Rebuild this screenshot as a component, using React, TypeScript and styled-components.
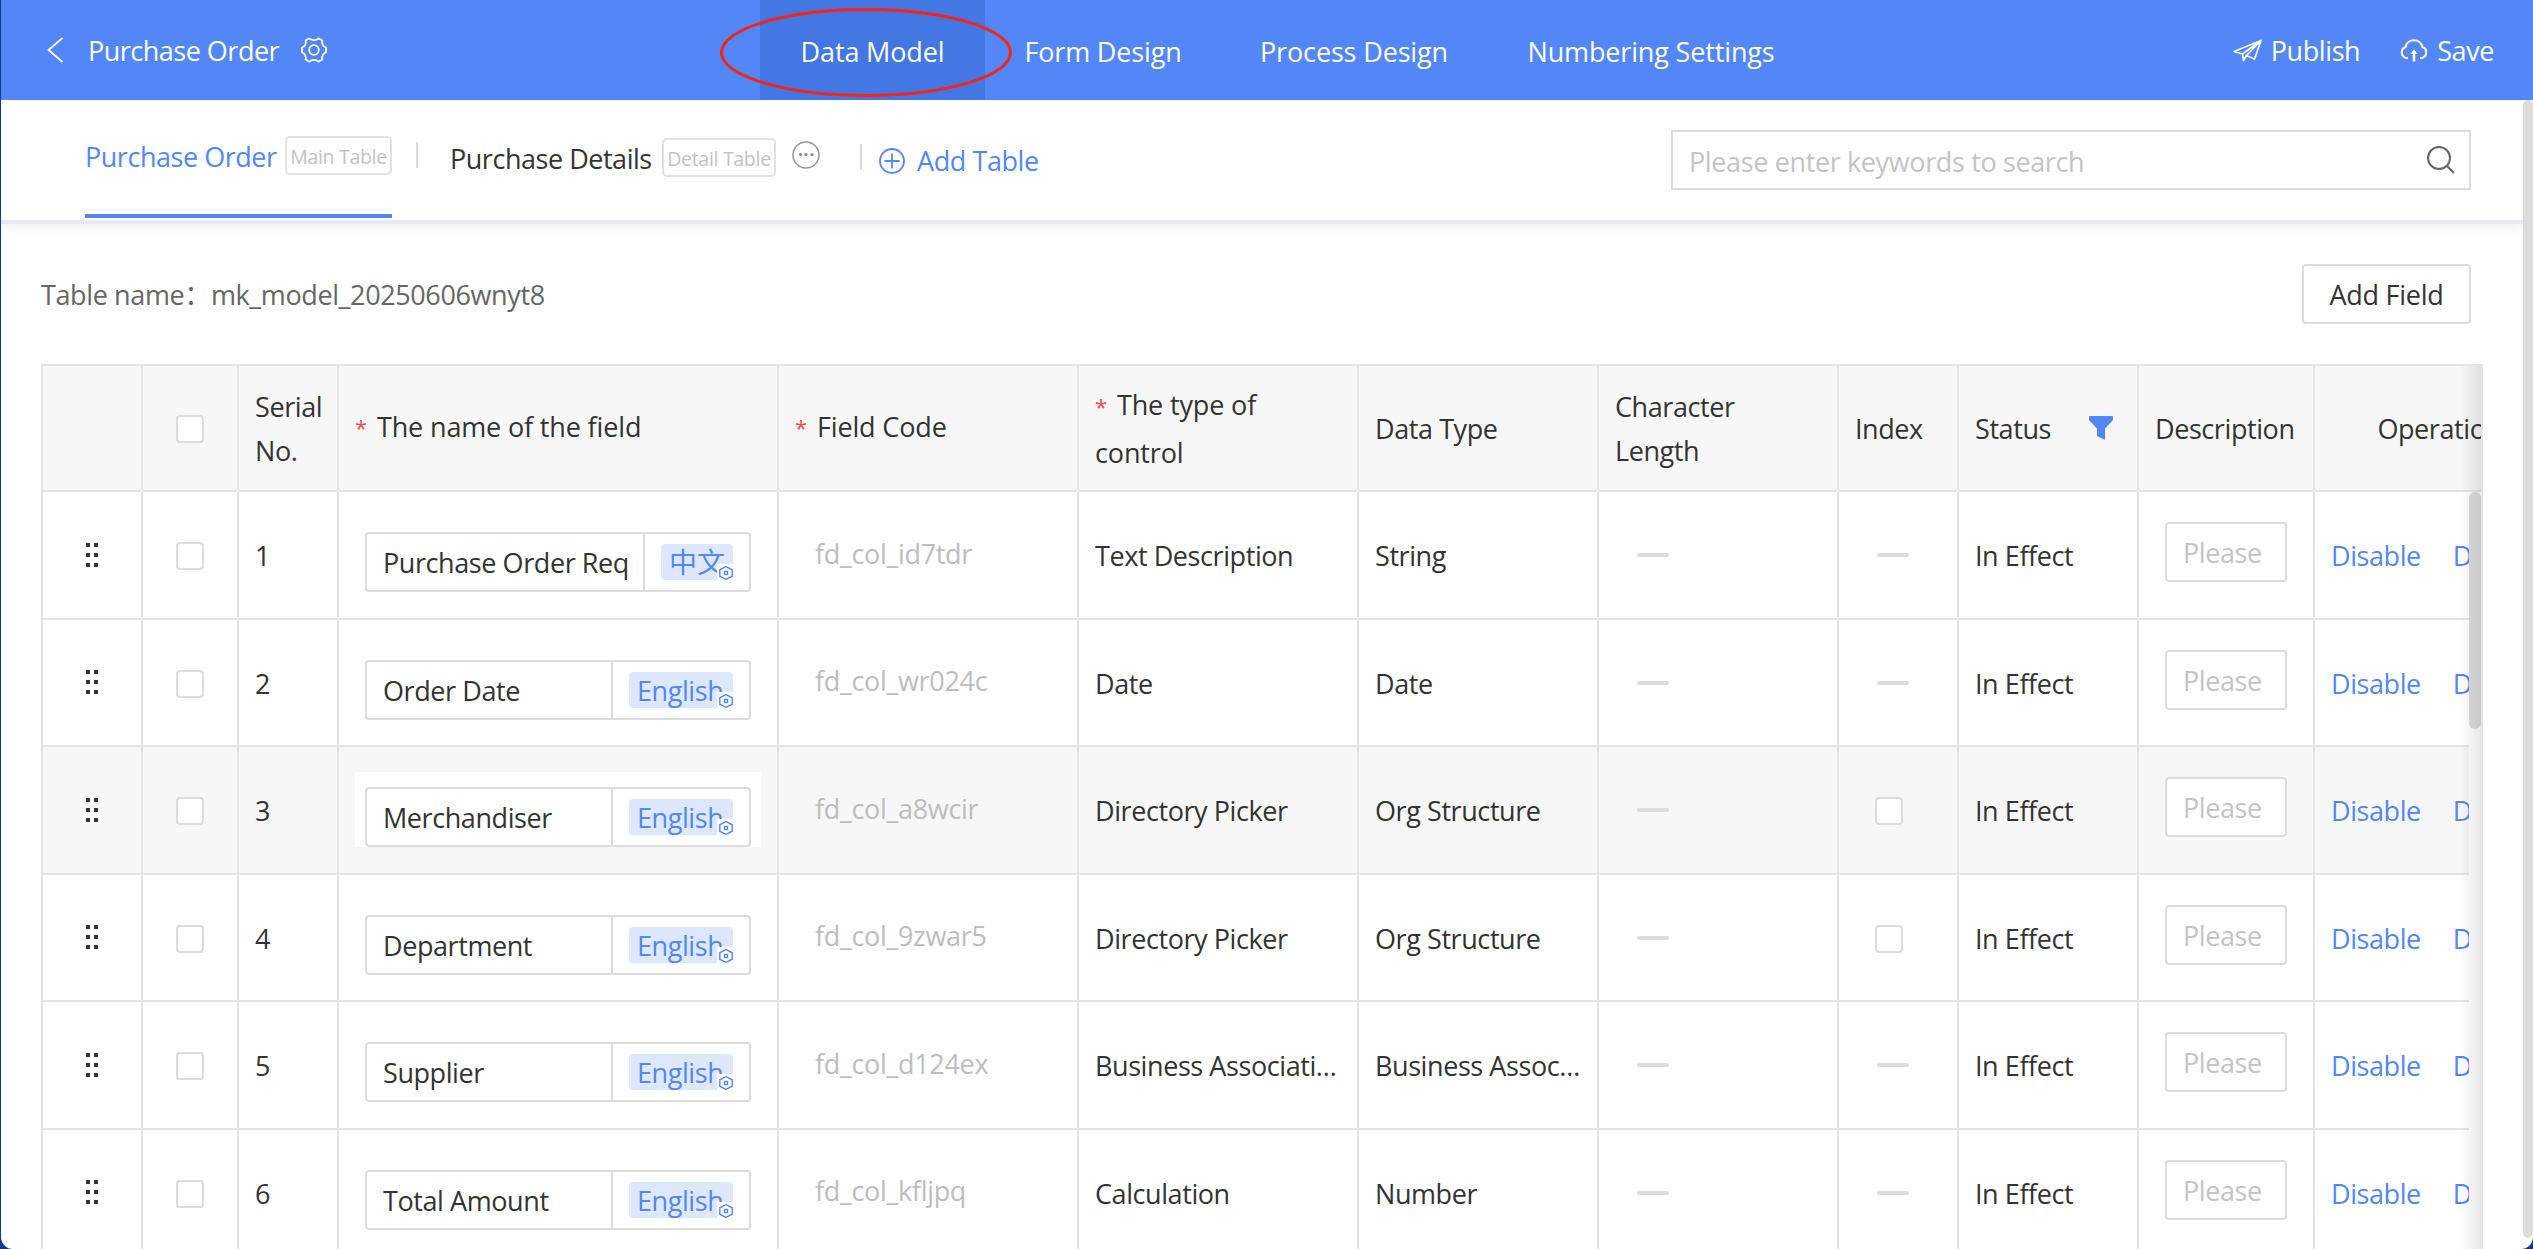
import React from "react";
import styled, { createGlobalStyle, css } from "styled-components";

const blue = "#5387f7";
const line = "#e4e4e4";
const boxLine = "#dcdcdc";

const GlobalStyle = createGlobalStyle`
  *, *::before, *::after { box-sizing: border-box; }
  html, body { margin: 0; height: 1249px; overflow: hidden; }
  body {
    background: #0b3a93;
    color: #333;
    font-family: "Open Sans", "Noto Sans CJK SC", sans-serif;
    font-size: 27px;
    letter-spacing: -0.42px;
    line-height: 44px;
    white-space: nowrap;
  }
`;

const Window = styled.div`
  display: flex;
  flex-direction: column;
  height: 1249px;
  margin-left: 1px;
  background: #fff;
  border-radius: 0 0 12px 12px;
  overflow: hidden;
`;

/* ---------- top bar ---------- */
const TopBar = styled.header`
  display: flex;
  flex: none;
  height: 100px;
  color: #fff;
  background: ${blue};
`;

const TopSide = styled.div<{ $w: number }>`
  display: flex;
  align-items: center;
  flex: none;
  width: ${(p) => p.$w}px;
  padding-left: 46px;
`;

const Title = styled.span`
  width: 191px;
  margin: 2px 22px 0 24px;
  letter-spacing: -0.5px;
`;

const Nav = styled.nav`
  display: flex;
  flex: 1;
  letter-spacing: -0.15px;
`;

const NavItem = styled.a<{ $w: number; $active?: boolean }>`
  position: relative;
  display: flex;
  align-items: center;
  justify-content: center;
  width: ${(p) => p.$w}px;
  padding-top: 3px;
  background: ${(p) => (p.$active ? "#4377e3" : "transparent")};
`;

const Highlight = styled.svg`
  position: absolute;
  left: -41px;
  top: 6px;
  z-index: 2;
`;

const Action = styled.button<{ $gap: number }>`
  display: flex;
  align-items: center;
  gap: 8px;
  margin-right: ${(p) => p.$gap}px;
  padding: 2px 0 0;
  border: 0;
  color: inherit;
  background: none;
  font: inherit;
  letter-spacing: inherit;
`;

/* ---------- body below the bar ---------- */
const Body = styled.div`
  display: flex;
  flex: 1;
  min-height: 0;
`;

const Main = styled.main`
  flex: 1;
  min-width: 0;
`;

const PageScroll = styled.div`
  width: 10px;
  height: 1138px;
  border-radius: 6px;
  background: #dcdcdc;
`;

const TabBar = styled.div`
  display: flex;
  height: 124px;
  padding: 0 52px 0 84px;
  border-bottom: 4px solid #e6eaf0;
  box-shadow: 0 4px 10px rgba(0, 0, 0, 0.06);
`;

const Tab = styled.div<{ $active?: boolean }>`
  display: flex;
  align-items: flex-start;
  gap: 9px;
  height: 118px;
  padding-top: ${(p) => (p.$active ? 36 : 38)}px;
  color: ${(p) => (p.$active ? blue : "#333")};
  border-bottom: ${(p) => (p.$active ? `4px solid ${blue}` : "0")};
`;

const TabName = styled.span<{ $w: number }>`
  width: ${(p) => p.$w}px;
  line-height: 42px;
  letter-spacing: -0.47px;
`;

const Kind = styled.span<{ $w: number }>`
  width: ${(p) => p.$w}px;
  height: 39px;
  border: 2px solid #e2e2e2;
  border-radius: 5px;
  color: #c0c3c8;
  font-size: 19.5px;
  line-height: 37px;
  letter-spacing: -0.3px;
  text-align: center;
`;

const Separator = styled.i<{ $left: number; $right: number; $top: number }>`
  width: 2px;
  height: 26px;
  margin: ${(p) => p.$top}px ${(p) => p.$right}px 0 ${(p) => p.$left}px;
  background: #dcdcdc;
`;

const More = styled.span`
  display: flex;
  margin: 41px 0 0 16px;
`;

const AddTable = styled.span`
  display: flex;
  align-items: center;
  gap: 12px;
  height: 44px;
  margin-top: 39px;
  color: ${blue};
`;

const Search = styled.label`
  display: flex;
  align-items: center;
  justify-content: space-between;
  width: 800px;
  height: 60px;
  margin: 30px 0 0 auto;
  padding: 0 14px 0 16px;
  border: 2px solid ${boxLine};
  color: #c4c4c4;
  letter-spacing: -0.37px;
  span { padding-top: 3px; }
`;

const Summary = styled.div`
  display: flex;
  align-items: center;
  justify-content: space-between;
  height: 140px;
  padding: 0 52px 0 40px;
  color: #666;
  span { padding-top: 2px; letter-spacing: -0.38px; }
`;

const Button = styled.button`
  width: 169px;
  height: 60px;
  padding: 2px 0 0;
  border: 2px solid ${boxLine};
  border-radius: 4px;
  color: #333;
  background: #fff;
  font: inherit;
  letter-spacing: -0.25px;
`;

/* ---------- field table ---------- */
const TableWrap = styled.section`
  position: relative;
  width: 2442px;
  height: 900px;
  margin-left: 40px;
  border: 2px solid ${line};
  overflow: hidden;
`;

const EdgeShade = styled.div`
  position: absolute;
  top: 0;
  right: 0;
  z-index: 3;
  width: 22px;
  height: 100%;
  background: linear-gradient(to right, rgba(0, 0, 0, 0), rgba(0, 0, 0, 0.09));
`;

const Thumb = styled.div`
  position: absolute;
  top: 126px;
  right: 0;
  z-index: 2;
  width: 12px;
  height: 237px;
  border-radius: 6px;
  background: #dcdcdc;
`;

const Viewport = styled.div`
  width: 2426px;
  overflow: hidden;
`;

const columns = css`
  display: grid;
  grid-template-columns: 100px 96px 100px 440px 300px 280px 240px 240px 120px 180px 176px 251px;
`;

const HeadRow = styled.div`
  ${columns}
  height: 126.4px;
  background: #f7f7f7;
`;

const Row = styled.div<{ $hover?: boolean }>`
  ${columns}
  height: 127.5px;
  background: ${(p) => (p.$hover ? "#f7f7f7" : "#fff")};
`;

const Cell = styled.div<{ $center?: boolean }>`
  display: flex;
  align-items: center;
  justify-content: ${(p) => (p.$center ? "center" : "flex-start")};
  min-width: 0;
  padding: 2px 16px 0;
  border-right: 2px solid ${line};
  border-bottom: 2px solid ${line};
`;

const HeadCell = styled(Cell)`
  white-space: normal;
`;

const RequiredCell = styled(HeadCell)<{ $tall?: boolean }>`
  padding-top: ${(p) => (p.$tall ? 1 : 0)}px;
  padding-bottom: ${(p) => (p.$tall ? 0 : 2)}px;
  line-height: 48px;
  letter-spacing: -0.15px;
`;

const Star = styled.span`
  margin-right: 10px;
  color: #f04b4b;
  font-size: 22px;
  line-height: 1;
`;

const HeadFilter = styled.div`
  display: flex;
  flex: 1;
  align-items: center;
  justify-content: space-between;
  padding-right: 8px;
  svg { margin-top: -3px; }
`;

const Ellipsis = styled.span`
  overflow: hidden;
  text-overflow: ellipsis;
`;

const Check = styled.i`
  width: 28px;
  height: 28px;
  border: 2px solid ${boxLine};
  border-radius: 4px;
  background: #fff;
`;

const IndexCell = styled(Cell)`
  padding-left: 36px;
`;

const Handle = styled.div`
  display: grid;
  grid-template-columns: 4px 4px;
  grid-auto-rows: 4px;
  gap: 6px 4px;
  margin-top: -3px;
  i { background: #333; }
`;

const Dash = styled.i`
  width: 32px;
  height: 4px;
  margin: -2px 0 0 22px;
  border-radius: 2px;
  background: #dcdcdc;
`;

const NameCell = styled(Cell)`
  align-items: flex-start;
  padding-top: 25px;
`;

const NameEditor = styled.div`
  width: 406px;
  height: 75px;
  padding: 15px 10px 0;
  background: #fff;
`;

const NameInput = styled.div`
  display: flex;
  height: 60px;
  border: 2px solid ${boxLine};
  border-radius: 4px;
`;

const NameText = styled.span`
  flex: 1;
  min-width: 0;
  overflow: hidden;
  padding: 7px 0 0 16px;
`;

const Language = styled.span`
  flex: none;
  padding: 10px 16px;
  border-left: 2px solid ${boxLine};
`;

const LanguageTag = styled.span<{ $chinese?: boolean }>`
  position: relative;
  display: block;
  width: ${(p) => (p.$chinese ? 72 : 104)}px;
  height: 36px;
  padding-left: 8px;
  border-radius: 4px;
  color: ${blue};
  background: #dde7fe;
  font-size: ${(p) => (p.$chinese ? 28 : 27)}px;
  letter-spacing: ${(p) => (p.$chinese ? 0 : -0.42)}px;
  line-height: ${(p) => (p.$chinese ? 36 : 38)}px;
`;

const TagGear = styled.svg`
  position: absolute;
  right: 0;
  bottom: 0;
  background: #fff;
`;

const Code = styled.span`
  margin-top: -5px;
  padding-left: 20px;
  color: #bdbdbd;
  letter-spacing: -0.32px;
`;

const DescCell = styled(Cell)`
  align-items: flex-start;
  padding: 30px 26px 0;
`;

const DescInput = styled.div`
  width: 122px;
  height: 60px;
  padding: 7px 16px;
  overflow: hidden;
  border: 2px solid ${boxLine};
  border-radius: 4px;
  color: #c4c4c4;
  background: #fff;
`;

const Links = styled.div`
  display: flex;
  gap: 32px;
  color: ${blue};
`;

type Field = {
  name: string;
  code: string;
  control: string;
  data: string;
  chinese?: boolean;
  indexable?: boolean;
  hover?: boolean;
};

const fields: Field[] = [
  { name: "Purchase Order Req", code: "fd_col_id7tdr", control: "Text Description", data: "String", chinese: true },
  { name: "Order Date", code: "fd_col_wr024c", control: "Date", data: "Date" },
  { name: "Merchandiser", code: "fd_col_a8wcir", control: "Directory Picker", data: "Org Structure", indexable: true, hover: true },
  { name: "Department", code: "fd_col_9zwar5", control: "Directory Picker", data: "Org Structure", indexable: true },
  { name: "Supplier", code: "fd_col_d124ex", control: "Business Association", data: "Business Association" },
  { name: "Total Amount", code: "fd_col_kfljpq", control: "Calculation", data: "Number" },
];

const GearIcon = () => (
  <svg width="26" height="26" viewBox="0 0 26 26" fill="none" stroke="#fff" strokeWidth="1.8" strokeLinejoin="round">
    <path d="M8.4 1.3 Q10.4 3.2 13 3.2 Q15.6 3.2 17.6 1.3 L21.3 3.5 Q20.7 6 22 8.2 Q23 9.8 25 10.6 V15.4 Q23 16.2 22 17.8 Q20.7 20 21.3 22.5 L17.6 24.7 Q15.6 22.8 13 22.8 Q10.4 22.8 8.4 24.7 L4.7 22.5 Q5.3 20 4 17.8 Q3 16.2 1 15.4 V10.6 Q3 9.8 4 8.2 Q5.3 6 4.7 3.5 Z" />
    <circle cx="13" cy="13" r="4.8" />
  </svg>
);

const FieldRow = ({ field, no }: { field: Field; no: number }) => (
  <Row $hover={field.hover}>
    <Cell $center>
      <Handle><i /><i /><i /><i /><i /><i /></Handle>
    </Cell>
    <Cell $center><Check /></Cell>
    <Cell>{no}</Cell>
    <NameCell>
      <NameEditor>
        <NameInput>
          <NameText>{field.name}</NameText>
          <Language>
            <LanguageTag $chinese={field.chinese}>
              {field.chinese ? "中文" : "English"}
              <TagGear width="16" height="16" viewBox="0 0 16 16" fill="none" stroke={blue} strokeWidth="1.4">
                <path d="M9 2.7 L15.2 5.8 V12.2 L9 15.3 L2.8 12.2 V5.8 Z" />
                <rect x="7.5" y="7.5" width="3" height="3" />
              </TagGear>
            </LanguageTag>
          </Language>
        </NameInput>
      </NameEditor>
    </NameCell>
    <Cell><Code>{field.code}</Code></Cell>
    <Cell><Ellipsis>{field.control}</Ellipsis></Cell>
    <Cell><Ellipsis>{field.data}</Ellipsis></Cell>
    <Cell><Dash /></Cell>
    {field.indexable ? <IndexCell><Check /></IndexCell> : <Cell><Dash /></Cell>}
    <Cell>In Effect</Cell>
    <DescCell><DescInput>Please</DescInput></DescCell>
    <Cell>
      <Links><span>Disable</span><span>Delete</span></Links>
    </Cell>
  </Row>
);

export default function App() {
  return (
    <>
      <GlobalStyle />
      <Window>
        <TopBar>
          <TopSide $w={759}>
            <svg width="17" height="26" viewBox="0 0 17 26" fill="none" stroke="#fff" strokeWidth="1.8">
              <path d="M15.5 1 L1.5 13 L15.5 25" />
            </svg>
            <Title>Purchase Order</Title>
            <GearIcon />
          </TopSide>
          <Nav>
            <NavItem $w={225} $active>
              Data Model
              <Highlight width="294" height="92" viewBox="0 0 294 92" fill="none">
                <ellipse cx="147" cy="46.5" rx="144.5" ry="43" stroke="#fb2313" strokeWidth="3" />
              </Highlight>
            </NavItem>
            <NavItem $w={236}>Form Design</NavItem>
            <NavItem $w={266}>Process Design</NavItem>
            <NavItem $w={328}>Numbering Settings</NavItem>
          </Nav>
          <Action $gap={39}>
            <svg width="30" height="24" viewBox="0 0 30 24" fill="none" stroke="#fff" strokeWidth="1.7" strokeLinejoin="round">
              <path d="M1 12.5 L28 1.5 L21.5 20 L13.5 16.5 L10.5 21.5 L9.5 15 Z M9.5 15 L28 1.5 L13.5 16.5" />
            </svg>
            Publish
          </Action>
          <Action $gap={39}>
            <svg width="30" height="24" viewBox="0 0 30 24" fill="none" stroke="#fff" strokeWidth="2">
              <path d="M9 19 H7.5 A5.7 5.7 0 0 1 6.6 8 A8.6 8.6 0 0 1 23.4 8 A5.7 5.7 0 0 1 22.5 19 H21" />
              <path d="M15 22.5 V12" strokeWidth="2.6" />
              <path d="M15 10.5 L18.5 15 H11.5 Z" fill="#fff" stroke="none" />
            </svg>
            Save
          </Action>
        </TopBar>
        <Body>
          <Main>
            <TabBar>
              <Tab $active>
                <TabName $w={191}>Purchase Order</TabName>
                <Kind $w={107}>Main Table</Kind>
              </Tab>
              <Separator $left={24} $right={32} $top={42} />
              <Tab>
                <TabName $w={203}>Purchase Details</TabName>
                <Kind $w={114}>Detail Table</Kind>
              </Tab>
              <More>
                <svg width="28" height="28" viewBox="0 0 28 28">
                  <circle cx="14" cy="14" r="13" fill="none" stroke="#999" strokeWidth="1.6" />
                  <g fill="#888">
                    <circle cx="8.5" cy="13.5" r="1.6" />
                    <circle cx="14" cy="13.5" r="1.6" />
                    <circle cx="20" cy="13.5" r="1.6" />
                  </g>
                </svg>
              </More>
              <Separator $left={40} $right={17} $top={44} />
              <AddTable>
                <svg width="26" height="26" viewBox="0 0 26 26" fill="none" stroke={blue} strokeWidth="1.8">
                  <circle cx="13" cy="13" r="12" />
                  <path d="M13 5.5 V20.5 M5.5 13 H20.5" />
                </svg>
                Add Table
              </AddTable>
              <Search>
                <span>Please enter keywords to search</span>
                <svg width="28" height="28" viewBox="0 0 28 28" fill="none" stroke="#666" strokeWidth="2">
                  <circle cx="12" cy="12" r="11" />
                  <path d="M20 20 L27 27" />
                </svg>
              </Search>
            </TabBar>
            <Summary>
              <span>Table name：mk_model_20250606wnyt8</span>
              <Button>Add Field</Button>
            </Summary>
            <TableWrap>
              <HeadRow>
                <HeadCell />
                <HeadCell $center><Check /></HeadCell>
                <HeadCell>Serial No.</HeadCell>
                <RequiredCell><Star>*</Star>The name of the field</RequiredCell>
                <RequiredCell><Star>*</Star>Field Code</RequiredCell>
                <RequiredCell $tall><span><Star>*</Star>The type of<br />control</span></RequiredCell>
                <HeadCell>Data Type</HeadCell>
                <HeadCell>Character<br />Length</HeadCell>
                <HeadCell>Index</HeadCell>
                <HeadCell>
                  <HeadFilter>
                    Status
                    <svg width="24" height="24" viewBox="0 0 24 24" fill={blue}>
                      <path d="M1 0 H23 Q24 0 24 1.2 V4 L16 12.5 V24 L8 20 V12.5 L0 4 V1.2 Q0 0 1 0 Z" />
                    </svg>
                  </HeadFilter>
                </HeadCell>
                <HeadCell>Description</HeadCell>
                <HeadCell $center>Operation</HeadCell>
              </HeadRow>
              <Viewport>
                {fields.map((f, i) => (
                  <FieldRow key={f.code} field={f} no={i + 1} />
                ))}
              </Viewport>
              <Thumb />
              <EdgeShade />
            </TableWrap>
          </Main>
          <PageScroll />
        </Body>
      </Window>
    </>
  );
}
